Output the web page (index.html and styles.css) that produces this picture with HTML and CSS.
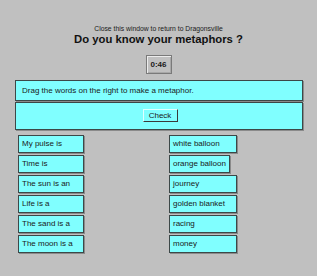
FILE: index.html
```html
<!DOCTYPE html>
<html lang="en">

<head>
  <meta charset="UTF-8" />
  <meta name="viewport" content="width=device-width, initial-scale=1.0" />
  <title>Metaphors</title>
  <link rel="stylesheet" href="styles.css">
</head>

<body>
  <div class="page">
    <div class="head">
      <p class="note">Close this window to return to Dragonsville</p>
      <h1>Do you know your metaphors ?</h1>
      <div class="timer">0:46</div>
    </div>
    <div class="panel">
      <div class="instr">Drag the words on the right to make a metaphor.</div>
      <div class="check-row">
        <button class="check">Check</button>
      </div>
    </div>
    <div class="words">
      <div class="item">My pulse is</div>
      <div class="item item-r">white balloon</div>
      <div class="item">Time is</div>
      <div class="item item-r item-fit">orange balloon</div>
      <div class="item">The sun is an</div>
      <div class="item item-r">journey</div>
      <div class="item">Life is a</div>
      <div class="item item-r">golden blanket</div>
      <div class="item">The sand is a</div>
      <div class="item item-r">racing</div>
      <div class="item">The moon is a</div>
      <div class="item item-r">money</div>
    </div>
  </div>
</body>

</html>
```

FILE: styles.css
```css
html,
body,
h1,
p {
  margin: 0;
  padding: 0;
}

body {
  background: #c0c0c0;
  font-family: "Liberation Sans", Arial, sans-serif;
  color: #1a1a1a;
}

.page {
  width: 317px;
  height: 276px;
  box-sizing: border-box;
  padding-top: 25px;
}

.head {
  display: flex;
  flex-direction: column;
  align-items: center;
}

.note {
  font-size: 6.8px;
  line-height: 8px;
}

h1 {
  font-size: 11.3px;
  line-height: 13px;
  font-weight: bold;
  color: #111;
}

.timer {
  margin-top: 9px;
  width: 26px;
  height: 19px;
  box-sizing: border-box;
  border: 1px solid #7a7a7a;
  box-shadow: inset 1px 1px 0 #ececec, inset -1px -1px 0 #a8a8a8;
  font-size: 8px;
  font-weight: bold;
  display: flex;
  align-items: center;
  justify-content: center;
}

.panel {
  margin: 6px 14px 0 15px;
}

.instr,
.check-row {
  background: #80ffff;
  border: 1px solid #3c4848;
  box-shadow: 1px 1px 0 #8a8a8a;
  box-sizing: border-box;
}

.instr {
  height: 21px;
  font-size: 8px;
  line-height: 19px;
  padding-left: 6px;
}

.check-row {
  margin-top: 1px;
  height: 28px;
  display: flex;
  justify-content: center;
  padding-top: 6px;
}

.check {
  height: 13px;
  width: 35px;
  padding: 0;
  background: #80ffff;
  border: 1px solid;
  border-color: #dfffff #3a3a3a #3a3a3a #dfffff;
  font-family: "Liberation Sans", Arial, sans-serif;
  font-size: 8px;
  color: #1a1a1a;
  margin-left: 2px;
}

.words {
  margin-top: 5px;
  padding-left: 18px;
  display: grid;
  grid-template-columns: 151px auto;
  row-gap: 2px;
  justify-items: start;
}

.item {
  width: 66px;
  height: 18px;
  box-sizing: border-box;
  background: #80ffff;
  border: 1px solid #3c4848;
  box-shadow: 1px 1px 0 #8a8a8a;
  font-size: 8px;
  line-height: 16px;
  padding-left: 3px;
}

.item-r {
  width: 68px;
}

.item-fit {
  width: 61px;
}
```
